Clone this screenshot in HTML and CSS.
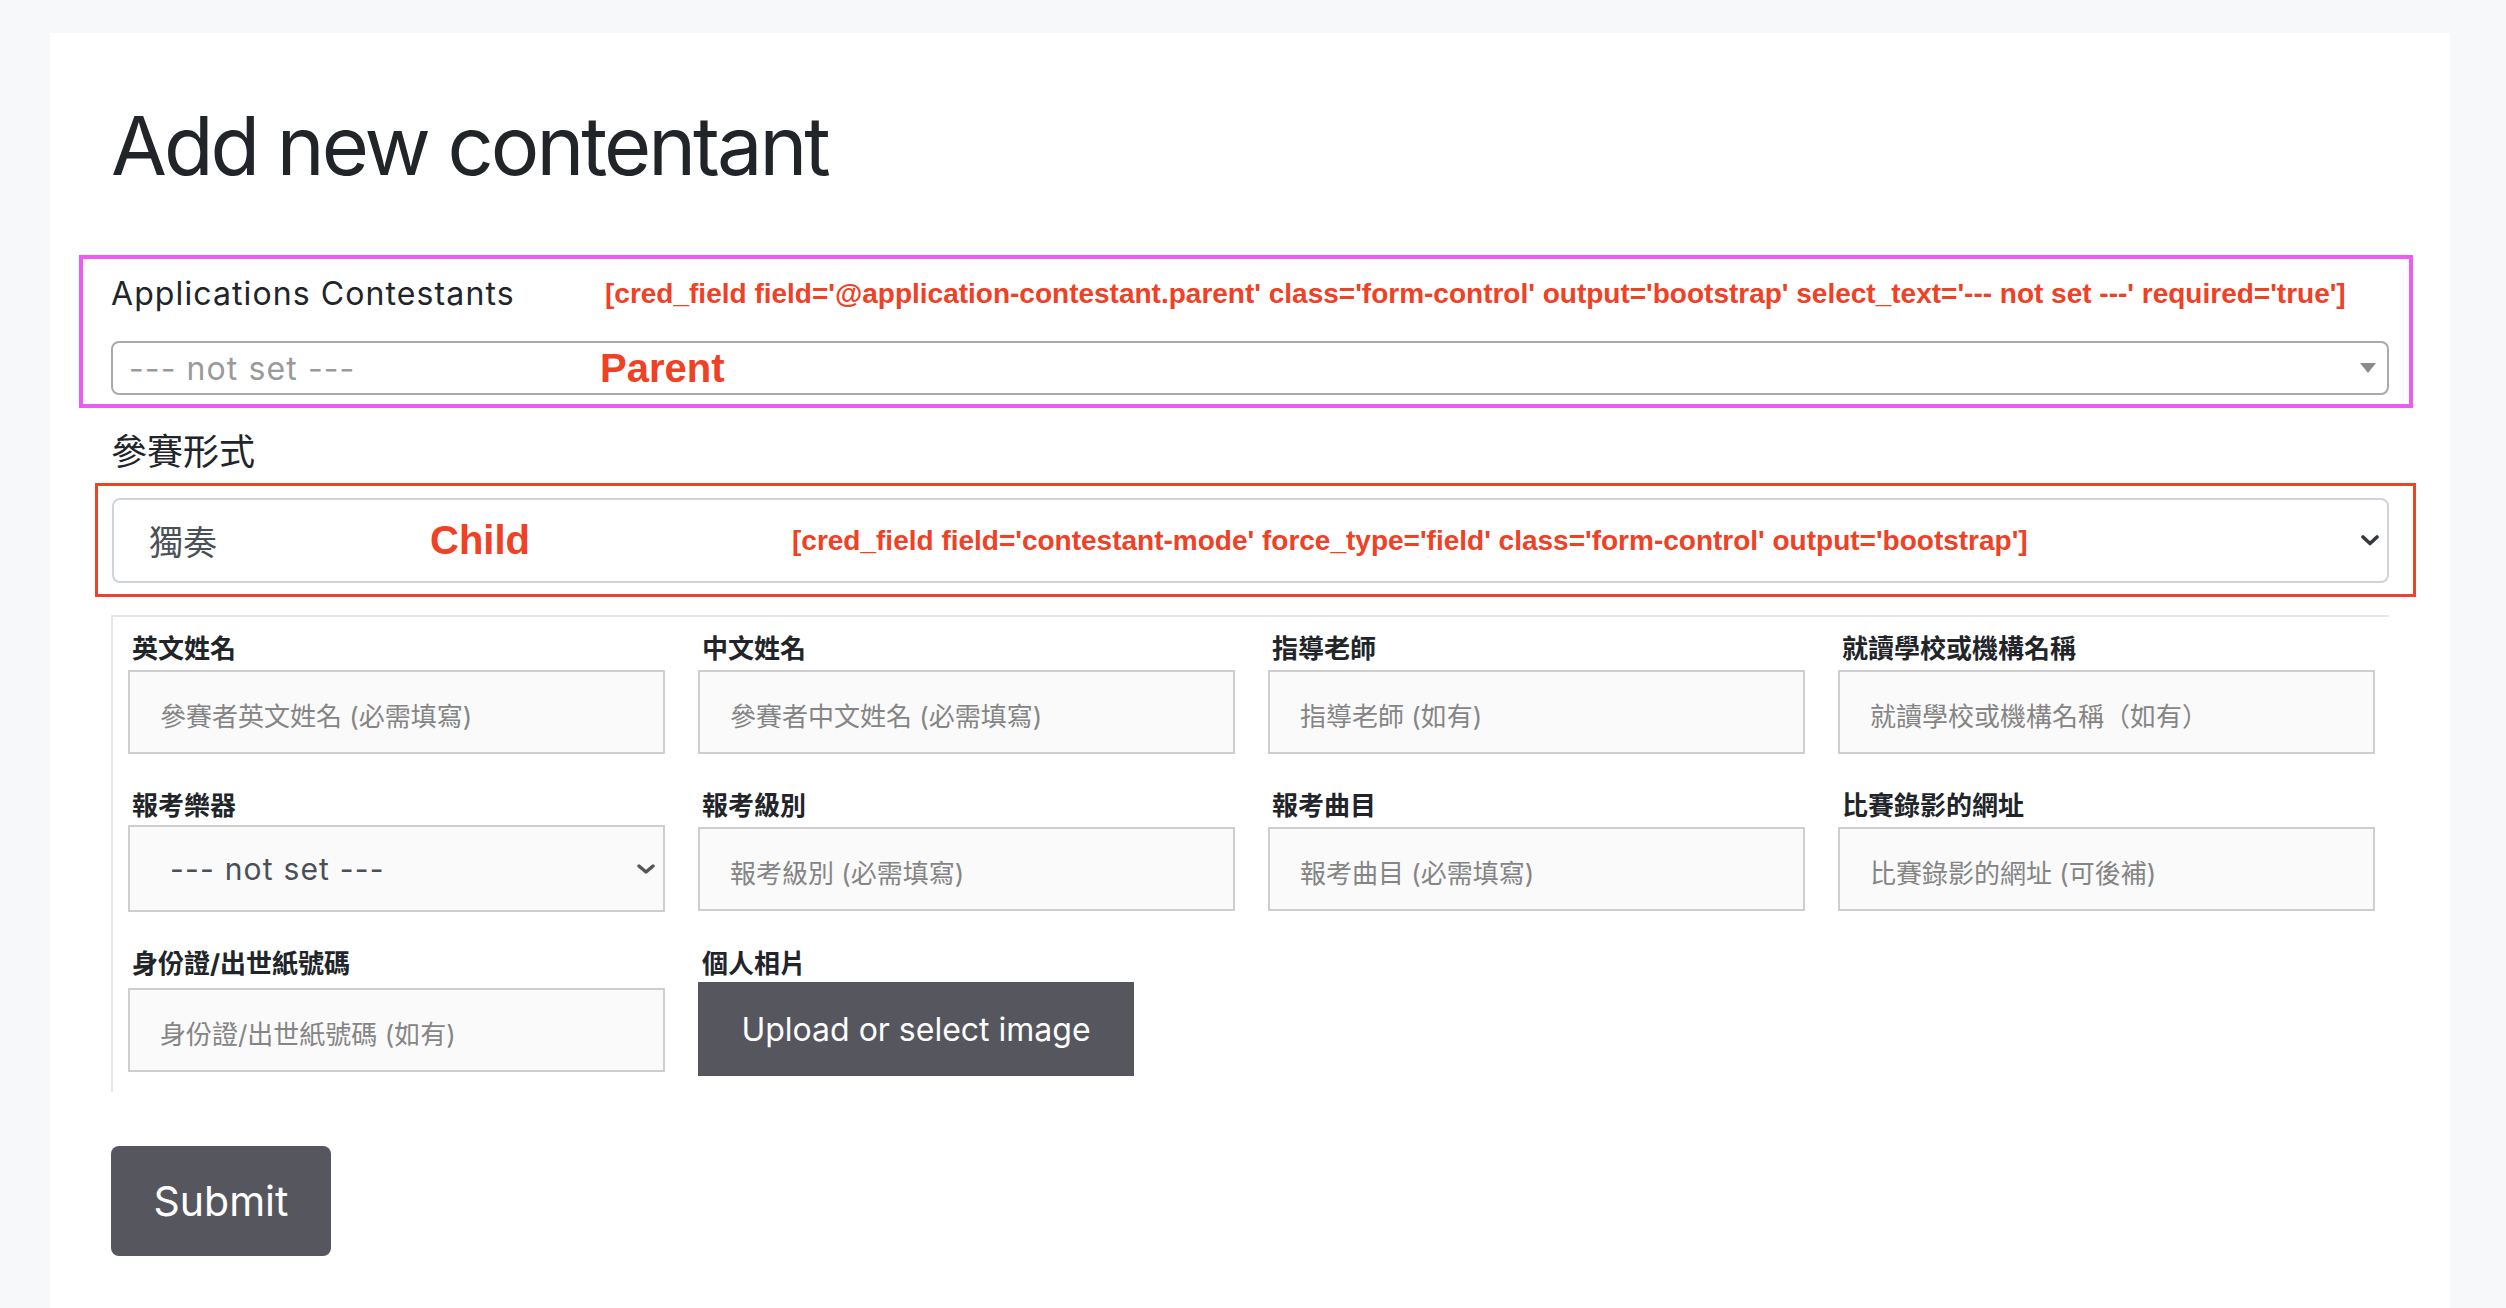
FILE: index.html
```html
<!DOCTYPE html>
<html lang="zh-Hant">
<head>
<meta charset="utf-8">
<title>Add new contentant</title>
<link rel="stylesheet" href="styles.css">
</head>
<body>
<main class="card">
  <h1 class="title">Add new contentant</h1>

  <section class="parent-box">
    <div class="parent-head">
      <span class="field-label">Applications Contestants</span>
      <span class="anno anno-head">[cred_field field='@application-contestant.parent' class='form-control' output='bootstrap' select_text='--- not set ---' required='true']</span>
    </div>
    <div class="select-old">
      <span class="ph-old">--- not set ---</span>
      <span class="tag">Parent</span>
      <svg class="tri" width="16" height="10" viewBox="0 0 16 10"><polygon points="0,0 16,0 8,10" fill="#8a8a8a"/></svg>
    </div>
  </section>

  <div class="mode-label">參賽形式</div>

  <section class="child-box">
    <div class="select-bs">
      <span class="val-cjk">獨奏</span>
      <span class="tag tag-child">Child</span>
      <span class="anno">[cred_field field='contestant-mode' force_type='field' class='form-control' output='bootstrap']</span>
      <svg class="chev" width="18" height="11" viewBox="0 0 18 11"><polyline points="2,2 9,8.5 16,2" fill="none" stroke="#343a40" stroke-width="3.6" stroke-linecap="round" stroke-linejoin="round"/></svg>
    </div>
  </section>

  <section class="grid-box">
    <div class="grid">
      <div class="field">
        <label class="lbl">英文姓名</label>
        <div class="inp">參賽者英文姓名 (必需填寫)</div>
      </div>
      <div class="field">
        <label class="lbl">中文姓名</label>
        <div class="inp">參賽者中文姓名 (必需填寫)</div>
      </div>
      <div class="field">
        <label class="lbl">指導老師</label>
        <div class="inp">指導老師 (如有)</div>
      </div>
      <div class="field">
        <label class="lbl">就讀學校或機構名稱</label>
        <div class="inp">就讀學校或機構名稱（如有）</div>
      </div>

      <div class="field">
        <label class="lbl lbl-tight">報考樂器</label>
        <div class="inp inp-select">
          <span>--- not set ---</span>
          <svg class="chev-s" width="18" height="10" viewBox="0 0 18 10"><polyline points="2,2 9,8 16,2" fill="none" stroke="#555" stroke-width="3.4" stroke-linecap="round" stroke-linejoin="round"/></svg>
        </div>
      </div>
      <div class="field">
        <label class="lbl">報考級別</label>
        <div class="inp">報考級別 (必需填寫)</div>
      </div>
      <div class="field">
        <label class="lbl">報考曲目</label>
        <div class="inp">報考曲目 (必需填寫)</div>
      </div>
      <div class="field">
        <label class="lbl">比賽錄影的網址</label>
        <div class="inp">比賽錄影的網址 (可後補)</div>
      </div>

      <div class="field">
        <label class="lbl lbl-loose">身份證/出世紙號碼</label>
        <div class="inp">身份證/出世紙號碼 (如有)</div>
      </div>
      <div class="field">
        <label class="lbl lbl-btn">個人相片</label>
        <button class="upload" type="button">Upload or select image</button>
      </div>
    </div>
  </section>

  <button class="submit" type="button">Submit</button>
</main>
</body>
</html>
```

FILE: styles.css
```css
* { box-sizing: border-box; }

html, body {
  margin: 0;
  padding: 0;
  background: #f7f8fa;
}

body {
  font-family: Inter, "Noto Sans CJK TC", sans-serif;
  color: #212529;
  height: 1308px;
  overflow: hidden;
}

.card {
  margin: 33px 56px 0 50px;
  background: #ffffff;
  min-height: 1400px;
  padding: 65px 61px 0 61px;
}

.title {
  margin: 0;
  font-weight: 400;
  font-size: 81px;
  line-height: 97px;
  letter-spacing: -3px;
  color: #212529;
}

/* parent (pink) box */
.parent-box {
  margin: 60px -24px 0 -32px;
  border: 4px solid #eb5cf2;
  padding: 15px 20px 9px 28px;
}

.parent-head {
  display: flex;
  align-items: flex-start;
  height: 40px;
}

.field-label {
  width: 494px;
  flex: none;
  font-size: 32px;
  line-height: 40px;
  letter-spacing: 1.1px;
  color: #212529;
}

.anno {
  font-family: "Liberation Sans", Arial, sans-serif;
  font-weight: 700;
  font-size: 28px;
  color: #ee4125;
  white-space: nowrap;
}

.anno-head { line-height: 40px; }

.select-old {
  margin-top: 27px;
  height: 54px;
  border: 2px solid #aaaaaa;
  border-radius: 8px;
  display: flex;
  align-items: center;
  padding: 0 11px 0 16px;
}

.ph-old {
  width: 471px;
  flex: none;
  font-size: 32px;
  letter-spacing: 1.1px;
  color: #9a9a9a;
  white-space: nowrap;
}

.tag {
  font-family: "Liberation Sans", Arial, sans-serif;
  font-weight: 700;
  font-size: 40px;
  color: #ee4125;
}

.tri { margin-left: auto; flex: none; }

.mode-label {
  margin-top: 19px;
  font-size: 36px;
  line-height: 51px;
  color: #212529;
}

/* child (red) box */
.child-box {
  margin: 5px -27px 0 -16px;
  border: 3px solid #ec4427;
  padding: 12px 24px 11px 14px;
}

.select-bs {
  height: 85px;
  border: 2px solid #ced4da;
  border-radius: 8px;
  display: flex;
  align-items: center;
  padding: 0 8px 0 35px;
}

.val-cjk {
  width: 281px;
  flex: none;
  font-size: 34px;
  color: #495057;
}

.tag-child { width: 362px; flex: none; }

.chev { margin-left: auto; flex: none; }

/* grid of fields */
.grid-box {
  margin-top: 18px;
  border-top: 2px solid #e6e6e6;
  border-left: 2px solid #e6e6e6;
  padding: 16px 0 16px 15px;
}

.grid {
  display: grid;
  grid-template-columns: repeat(4, 537px);
  column-gap: 33px;
  row-gap: 36px;
}

.field { display: flex; flex-direction: column; }

.lbl {
  font-weight: 700;
  font-size: 26px;
  line-height: 31px;
  margin-bottom: 6px;
  padding-left: 4px;
  color: #212529;
  white-space: nowrap;
}

.lbl-tight { margin-bottom: 4px; }
.lbl-loose { margin-bottom: 9px; }
.lbl-btn { margin-bottom: 3px; }

.inp {
  height: 84px;
  border: 2px solid #cecece;
  background: #fafafa;
  display: flex;
  align-items: center;
  padding: 4px 30px 0 30px;
  font-size: 26px;
  color: #858585;
  white-space: nowrap;
}

.inp-select {
  height: 87px;
  padding: 0 8px 0 40px;
  font-size: 30px;
  letter-spacing: 1.2px;
  color: #495057;
}

.chev-s { margin-left: auto; flex: none; }

.upload {
  width: 436px;
  height: 94px;
  border: 0;
  margin: 0;
  padding: 0;
  background: #56565e;
  color: #ffffff;
  font-family: Inter, sans-serif;
  font-size: 32px;
  text-align: center;
}

.submit {
  margin-top: 54px;
  width: 220px;
  height: 110px;
  border: 0;
  border-radius: 8px;
  background: #56565e;
  color: #ffffff;
  font-family: Inter, sans-serif;
  font-size: 41px;
  text-align: center;
  padding: 0;
}
```
